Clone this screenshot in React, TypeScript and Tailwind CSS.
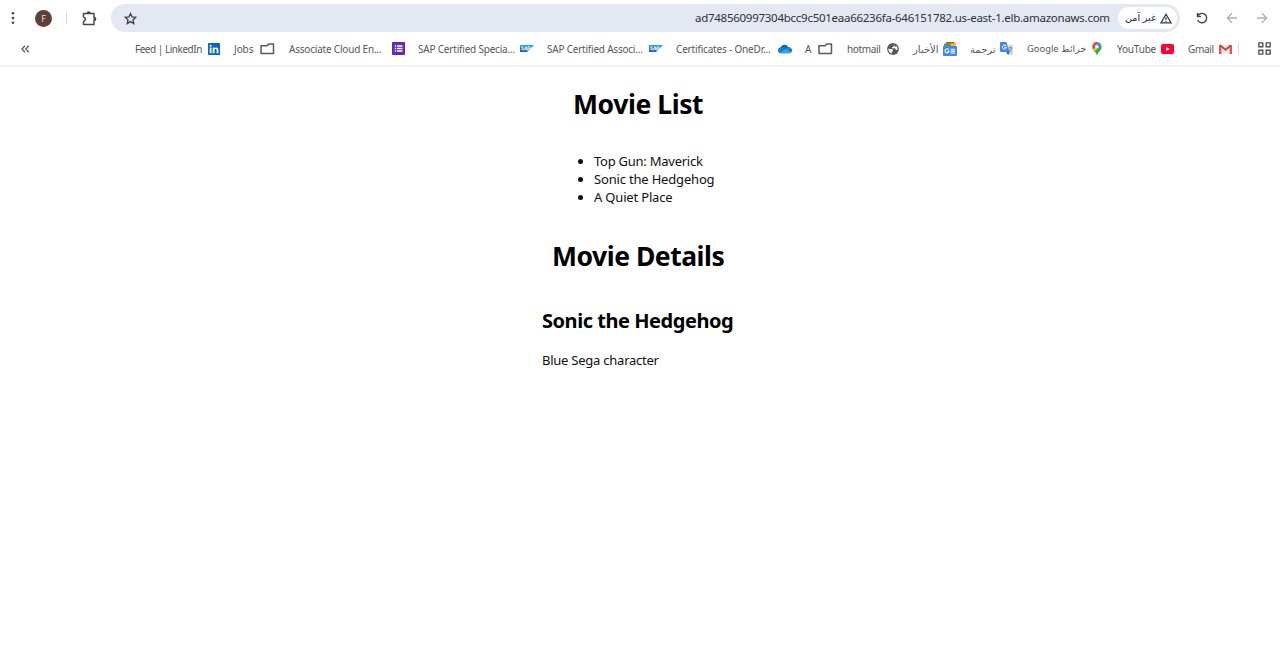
import type { ReactNode } from 'react'

function Folder() {
  return (
    <svg width="15" height="13" viewBox="0 0 15 13" fill="none" stroke="#5a5a5a" strokeWidth="1.5" strokeLinejoin="round">
      <path d="M1 3.700h6l1.700-1.600h4.800V11.500H1z" />
    </svg>
  )
}

function LinkedIn() {
  return (
    <svg width="12" height="12" viewBox="0 0 12 12">
      <rect width="12" height="12" rx="0.8" fill="#0a66c2" />
      <path d="M1.7 4.600h1.800V10.200H1.700zM4.700 4.600h1.700v.8c.8-1.400 4-1.500 4 1.500v3.300H8.600V7.400c0-1.800-2.100-1.700-2.100 0v2.800H4.700z" fill="#fff" />
      <circle cx="2.600" cy="2.700" r="1.050" fill="#fff" />
    </svg>
  )
}

function Forms() {
  return (
    <svg width="13" height="13" viewBox="0 0 14 14">
      <rect width="14" height="14" rx="0.8" fill="#5b2fb5" />
      <path d="M3 3.500h1.500v1.500H3zM5.500 3.500h5.800v1.500H5.500zM3 6.250h1.500v1.500H3zM5.500 6.250h5.800v1.500H5.500zM3 9h1.500v1.500H3zM5.500 9h5.800v1.500H5.500z" fill="#fff" />
    </svg>
  )
}

function Sap() {
  return (
    <svg width="14" height="7" viewBox="0 0 14 7">
      <defs>
        <linearGradient id="sap" x1="0" y1="0" x2="0" y2="1">
          <stop offset="0" stopColor="#1ba8ea" />
          <stop offset="1" stopColor="#1d5fc0" />
        </linearGradient>
      </defs>
      <path d="M0 0h14L7 7H0z" fill="url(#sap)" />
      <path d="M3.700 1.900c-1-.5-2.300-.3-2.100.5s2 .6 2 1.500-1.500.8-2.300.3M4.300 5.300 6 1.600l1.500 3.700M5 4.200h2M8 5.300V1.800h1.300c1.600 0 1.600 2 0 2H8" fill="none" stroke="#fff" strokeWidth="0.850" />
    </svg>
  )
}

function Cloud() {
  return (
    <svg width="14" height="10" viewBox="0 0 14 10">
      <path d="M3.300 9.200C-.8 9.200-.8 4 2.700 3.500 3.700.3 8.800-.5 10.300 3.300c2.700 0 3.700 2 3.700 3 0 1.500-1 2.900-2.800 2.900z" fill="#0a67c0" />
      <path d="M2.600 3.500c1.800-.2 3 .6 4.500 1.600L2.200 9C-.8 8.400-.6 4 2.600 3.500z" fill="#0d82d8" />
      <path d="M7.100 5.100c1-.9 2-1.800 3.200-1.800 2.700 0 3.700 2 3.700 3z" fill="#1490df" />
      <path d="m2.100 9 5-3.900 6.600 2.700c-.5.900-1.300 1.400-2.500 1.400H3.300z" fill="#28a8ea" />
    </svg>
  )
}

function Globe() {
  return (
    <svg width="12" height="12" viewBox="0 0 12 12">
      <circle cx="6" cy="6" r="5.900" fill="#55585c" />
      <path d="M1.400 5.400 2.700 6.100H5l1 1v1.200H4.900v2.200C2.500 10 1.200 7.900 1.400 5.400z" fill="#fff" />
      <path d="M5.300 1.400h2.500v1.400H6.500v1.200H5v1.200h3l.9 1.500h1.600c.2-1.500-.2-2.700-1-3.700l-.8.800H7.800V1.700" fill="#fff" />
    </svg>
  )
}

function News() {
  return (
    <svg width="14" height="14" viewBox="0 0 14 14">
      <path d="M3 0h8.500v6H3z" fill="#ea4335" />
      <path d="m5 1.800 8-.6v5H2z" fill="#fbbc04" />
      <path d="M1 1.800 7 .9l2 5H1z" fill="#34a853" />
      <rect y="4" width="14" height="10" rx="0.800" fill="#4285f4" />
      <path d="M5.800 7.500c-1.500-1.400-3.700-.5-3.700 1.500 0 2.400 3.700 2.600 3.900.2H4.300M7.600 7.200h4.300M7.600 9.100h4.500M7.600 11h4.300" fill="none" stroke="#fff" strokeWidth="1.100" />
    </svg>
  )
}

function Translate() {
  return (
    <svg width="13" height="13" viewBox="0 0 13 13">
      <path d="M4.500 3h7.700c.5 0 .8.300.8.800v8.400c0 .5-.3.800-.8.800H8z" fill="#d7dbe1" />
      <path d="M.8 0h5.500l3.200 10H.8a.8.800 0 0 1-.8-.8V.8C0 .3.300 0 .8 0z" fill="#4285f4" />
      <path d="m6.500 10 3 0L8 13z" fill="#174ea6" />
      <path d="M6.100 3.700C4.700 2.400 2.400 3.200 2.400 5.100c0 2.500 3.700 2.700 4 .2H4.300" fill="none" stroke="#fff" />
      <path d="M8.400 5.800h4M10.300 4.900v.9M11.700 5.900c-.3 1.700-1.500 2.900-2.500 3.600M9.200 7.200c.4 1.200 1.400 2 2.400 2.900" fill="none" stroke="#617a8b" strokeWidth="0.800" />
    </svg>
  )
}

function MapPin() {
  return (
    <svg width="10" height="13" viewBox="0 0 10 13">
      <path d="M.9 7.300C1.700 8.900 4.100 10.500 4.500 12.500c.2.700.8.700 1 0C6 9.800 9.700 8.300 9.700 4.700L8 1.500 3 5z" fill="#34a853" />
      <path d="M.9 7.300 6.800 3.500 4 8.500 2.300 9.200z" fill="#fbbc04" />
      <path d="M1.100 1.800 4 4.300.9 7.400C0 5.700 0 3.400 1.100 1.800z" fill="#ea4335" />
      <path d="M1.100 1.800C2.300.2 4.300-.3 6.300.2L3.600 4z" fill="#ea4335" />
      <path d="M6.200.2C7.700.6 8.700 1.500 9.300 2.900L6.300 5.800 3.600 3.700z" fill="#4285f4" />
      <circle cx="4.900" cy="4.700" r="1.800" fill="#fff" />
    </svg>
  )
}

function YouTube() {
  return (
    <svg width="13" height="10" viewBox="0 0 13 10">
      <rect width="13" height="10" rx="2" fill="#ff0033" />
      <path d="M5.100 2.900v4.200L8.800 5z" fill="#fff" />
    </svg>
  )
}

function Gmail() {
  return (
    <svg width="13" height="10" viewBox="0 0 13 10">
      <path d="M1 1h11v9H1z" fill="#f0ecec" />
      <path d="M0 1.200h2.300V10H0zM10.700 1.200H13V10h-2.300z" fill="#d9594c" />
      <path d="m1 1.300 5.500 4.500L12 1.300" fill="none" stroke="#d93f32" strokeWidth="2" />
    </svg>
  )
}

type Bookmark = { label: string; box: string; text: string; icon: ReactNode; rtl?: boolean }

const bookmarks: Bookmark[] = [
  { label: 'Feed | LinkedIn', box: 'w-[99px]', text: 'w-[73px] tracking-[-0.48px]', icon: <LinkedIn /> },
  { label: 'Jobs', box: 'w-[55px]', text: 'w-[26px] tracking-[-0.1px]', icon: <Folder /> },
  { label: 'Associate Cloud En...', box: 'w-[129px]', text: 'w-[103px] tracking-[-0.2px]', icon: <Forms /> },
  { label: 'SAP Certified Specia...', box: 'w-[129px]', text: 'w-[102px] tracking-[-0.2px]', icon: <Sap /> },
  { label: 'SAP Certified Associ...', box: 'w-[129px]', text: 'w-[102px] tracking-[-0.22px]', icon: <Sap /> },
  { label: 'Certificates - OneDr...', box: 'w-[129px]', text: 'w-[102px] tracking-[-0.18px]', icon: <Cloud /> },
  { label: 'A', box: 'w-[42px]', text: 'w-[13px]', icon: <Folder /> },
  { label: 'hotmail', box: 'w-[66px]', text: 'w-[40px] tracking-[-0.35px]', icon: <Globe /> },
  { label: 'الأخبار', box: 'w-[57px]', text: 'w-[30px]', icon: <News />, rtl: true },
  { label: 'ترجمة', box: 'w-[57px]', text: 'w-[30px]', icon: <Translate />, rtl: true },
  { label: 'خرائط Google', box: 'w-[90px]', text: 'w-[65px] text-[9.400px]', icon: <MapPin />, rtl: true },
  { label: 'YouTube', box: 'w-[71px]', text: 'w-[44px] tracking-[-0.2px]', icon: <YouTube /> },
  { label: 'Gmail', box: 'w-[50px]', text: 'w-[31px] tracking-[-0.35px]', icon: <Gmail /> },
]

function Toolbar() {
  return (
    <div className="flex h-9 items-center pl-[11px]">
      <svg width="4" height="14" viewBox="0 0 4 14" fill="#474747" className="shrink-0">
        <circle cx="2" cy="2.200" r="1.300" />
        <circle cx="2" cy="7" r="1.300" />
        <circle cx="2" cy="11.800" r="1.300" />
      </svg>
      <div className="ml-5 flex size-[17px] shrink-0 items-center justify-center rounded-full bg-[#5d4037] text-[9px] leading-none text-[#e5dcda]">F</div>
      <div className="ml-[14px] h-3 w-px shrink-0 bg-[#c9dcfb]" />
      <svg width="15" height="15" viewBox="0 0 15 15" fill="none" stroke="#474747" strokeWidth="1.500" strokeLinejoin="round" className="ml-[15px] shrink-0">
        <path d="M1.500 2.500h10.500v4.200a1.200 1.200 0 0 1 0 2.400v4.400H1.500v-3.100c2.500-.3 2.500-4.200 0-4.500z" />
        <path d="M5.300 2.200a1.300 1.300 0 0 1 2.600 0M12.300 6.600a1.300 1.300 0 0 1 0 2.600" fill="#474747" />
      </svg>
      <div className="ml-[14px] flex h-7 w-[1069px] shrink-0 items-center rounded-full bg-[#e4e8f2] pl-[13px] pr-[3px]">
        <svg width="13" height="13" viewBox="0 0 13 13" fill="none" stroke="#3f4247" strokeWidth="1.300" strokeLinejoin="miter">
          <path d="m6.500 1.500 1.500 3.400 3.800.4L9 7.900l.8 3.700-3.300-2-3.300 2L4 7.900 1.200 5.300l3.800-.4z" />
        </svg>
        <div className="ml-auto w-[423px] whitespace-nowrap text-[11.500px] tracking-[-0.265px] text-[#303236]">ad748560997304bcc9c501eaa66236fa-646151782.us-east-1.elb.amazonaws.com</div>
        <div className="flex h-[22px] w-[59px] items-center justify-between rounded-full bg-white pl-[7px] pr-[5px]">
          <span dir="rtl" className="whitespace-nowrap text-[9.700px] text-[#252629]">غير آمن</span>
          <svg width="12" height="11" viewBox="0 0 13 12" fill="none" stroke="#37393d" strokeWidth="1.300">
            <path d="M6.500 1.300 12 10.800H1zM6.500 4.500v3M6.500 8.500v1.200" />
          </svg>
        </div>
      </div>
      <svg width="12" height="12" viewBox="0 0 12 12" fill="none" stroke="#474747" strokeWidth="1.400" className="ml-4 shrink-0">
        <path d="M1.500 1v3.500H5M1.800 4.200C3 1.400 6.500.5 8.900 2.400c2.500 2 2.300 5.900-.4 7.700-2.300 1.400-5.500.7-6.800-2" />
      </svg>
      <svg width="12" height="12" viewBox="0 0 12 12" fill="none" stroke="#afb1b4" strokeWidth="1.300" className="ml-[18px] shrink-0">
        <path d="M11 6H1.500M6 1.300 1.300 6 6 10.700" />
      </svg>
      <svg width="12" height="12" viewBox="0 0 12 12" fill="none" stroke="#afb1b4" strokeWidth="1.300" className="ml-[18px] shrink-0">
        <path d="M1 6h9.500M6 1.300 10.700 6 6 10.700" />
      </svg>
    </div>
  )
}

function BookmarkBar() {
  return (
    <div className="flex h-[31px] items-center border-b-2 border-[#f1f1f2] pb-1 pl-[21px] text-[10px] text-[#55575a]">
      <svg width="9" height="8" viewBox="0 0 9 8" fill="none" stroke="#5a5c60" strokeWidth="1.300" className="shrink-0">
        <path d="M4 .8 1 4l3 3.200M7.800.8l-3 3.200 3 3.200" />
      </svg>
      <div className="ml-[105px] flex">
        {bookmarks.map((b) => (
          <div key={b.label} className={`flex shrink-0 items-center ${b.box}`}>
            <span className={`shrink-0 whitespace-nowrap leading-4 ${b.text}`}>
              <bdi dir={b.rtl ? 'rtl' : 'ltr'}>{b.label}</bdi>
            </span>
            <span className="shrink-0">{b.icon}</span>
          </div>
        ))}
      </div>
      <div className="h-3 w-px shrink-0 bg-[#c9dcfb]" />
      <svg width="13" height="13" viewBox="0 0 12 12" fill="none" stroke="#505256" strokeWidth="1.300" className="ml-[19px] shrink-0">
        <path d="M.8.8h3.600v3.600H.8zM7.600.8h3.600v3.600H7.600zM.8 7.600h3.600v3.600H.8zM7.600 7.600h3.600v3.600H7.600z" />
      </svg>
    </div>
  )
}

export default function App() {
  return (
    <div className="h-[647px] overflow-hidden bg-white font-['Noto_Sans','DejaVu_Sans',sans-serif]">
      <Toolbar />
      <BookmarkBar />
      <main className="flex flex-col pl-[542px] text-[13px] leading-[18px] text-[#101010]">
        <h1 className="mt-[19px] pl-[31px] text-[26.500px] font-bold leading-9 tracking-[-0.42px] text-black">Movie List</h1>
        <ul className="mt-[30px] list-disc pl-[52px] tracking-[-0.18px]">
          <li className="tracking-[-0.25px]">Top Gun: Maverick</li>
          <li>Sonic the Hedgehog</li>
          <li>A Quiet Place</li>
        </ul>
        <h1 className="mt-8 pl-[10px] text-[26.500px] font-bold leading-9 tracking-[-0.48px] text-black">Movie Details</h1>
        <h2 className="mt-[33px] text-[20px] font-bold leading-7 tracking-[-0.46px] text-black">Sonic the Hedgehog</h2>
        <p className="mt-4 tracking-[-0.24px]">Blue Sega character</p>
      </main>
    </div>
  )
}
